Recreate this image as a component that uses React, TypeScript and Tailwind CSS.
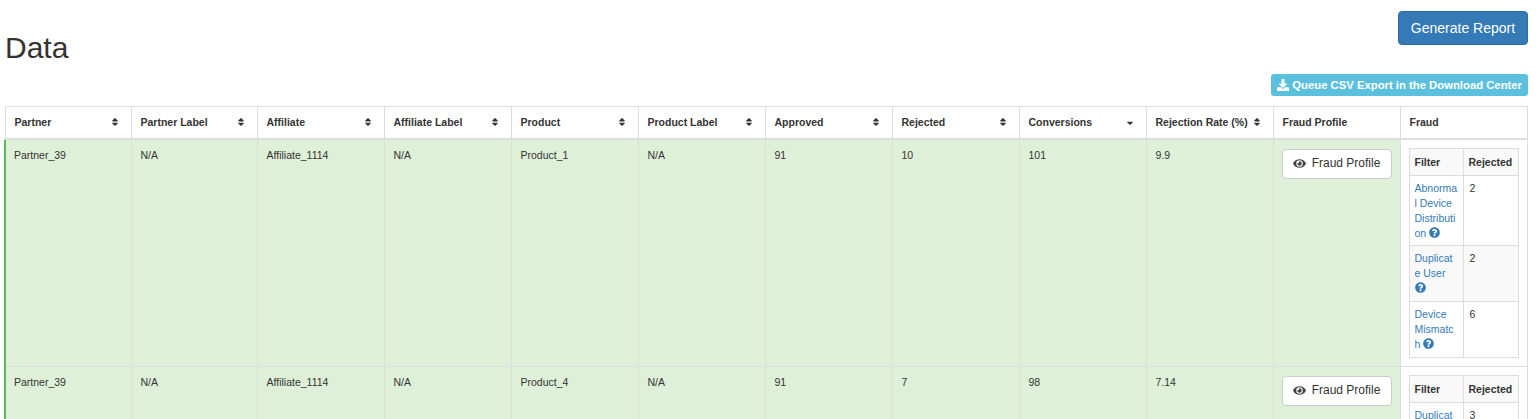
import React from "react";
import { FaDownload, FaEye, FaQuestionCircle, FaSort, FaSortDown } from "react-icons/fa";

const columns = [
  { label: "Partner", width: "w-[126px] pl-[9px]" },
  { label: "Partner Label", width: "w-[126px] pl-[9px]" },
  { label: "Affiliate", width: "w-[127px] pl-[9px]" },
  { label: "Affiliate Label", width: "w-[127px] pl-[9px]" },
  { label: "Product", width: "w-[127px] pl-[9px]" },
  { label: "Product Label", width: "w-[127px] pl-[9px]" },
  { label: "Approved", width: "w-[127px] pl-[9px]" },
  { label: "Rejected", width: "w-[127px] pl-[9px]" },
  { label: "Conversions", width: "w-[127px] pl-[9px]" },
  { label: "Rejection Rate (%)", width: "w-[127px] pl-[9px]" },
];

// the narrow filter column breaks words mid-way, lines are kept as they wrap
const rows = [
  {
    values: ["Partner_39", "N/A", "Affiliate_1114", "N/A", "Product_1", "N/A", "91", "10", "101", "9.9"],
    fraud: [
      { filter: ["Abnorma", "l Device", "Distributi", "on"], rejected: 2 },
      { filter: ["Duplicat", "e User", ""], rejected: 2 },
      { filter: ["Device", "Mismatc", "h"], rejected: 6 },
    ],
  },
  {
    values: ["Partner_39", "N/A", "Affiliate_1114", "N/A", "Product_4", "N/A", "91", "7", "98", "7.14"],
    fraud: [
      { filter: ["Duplicat", "e User", ""], rejected: 3 },
      { filter: ["Device", "Mismatc", "h"], rejected: 4 },
    ],
  },
];

const FraudTable = ({ items }: { items: { filter: string[]; rejected: number }[] }) => (
  <table className="w-full table-fixed border-collapse bg-white">
    <thead>
      <tr>
        <th className="w-[54px] border border-[#ddd] bg-[#f9f9f9] px-[5px] pt-[6px] pb-[5px] text-left font-bold">Filter</th>
        <th className="border border-[#ddd] bg-[#f9f9f9] px-[5px] pt-[6px] pb-[5px] text-left font-bold">Rejected</th>
      </tr>
    </thead>
    <tbody>
      {items.map((item, i) => (
        <tr key={item.filter.join("")} className={i % 2 === 1 ? "bg-[#f9f9f9]" : "bg-white"}>
          <td
            className={`border border-[#ddd] pt-[5px] pr-[3px] pl-[5px] align-top whitespace-nowrap text-[#337ab7] ${
              i === 0 ? "pb-[4px]" : "pb-[5px]"
            }`}
          >
            {item.filter.map((line, l) => (
              <React.Fragment key={l}>
                {line}
                {l < item.filter.length - 1 && <br />}
              </React.Fragment>
            ))}{" "}
            <FaQuestionCircle className="inline-block align-[-1px] text-[11px]" />
          </td>
          <td className="border border-[#ddd] p-[5px] pl-[6px] align-top">{item.rejected}</td>
        </tr>
      ))}
    </tbody>
  </table>
);

export default function App() {
  return (
    <div className="h-screen w-full overflow-hidden bg-white pl-[4px] pr-[9px] font-['Liberation_Sans',Arial,sans-serif] text-[10.5px] leading-[15px] text-[#333]">
      <div className="flex items-start justify-between">
        <h1 className="mt-[31px] pl-[1px] text-[30px] leading-[33px] font-normal">Data</h1>
        <button className="mt-[11px] h-[34px] w-[130px] rounded-[4px] border border-[#2e6da4] bg-[#337ab7] text-[14px] text-white">
          Generate Report
        </button>
      </div>
      <div className="mt-[10px] flex justify-end">
        <button className="flex h-[22px] items-center gap-[3px] rounded-[3px] bg-[#5bc0de] pr-[6px] pl-[6px] text-[11.3px] font-bold text-white">
          <FaDownload className="text-[12px]" />
          Queue CSV Export in the Download Center
        </button>
      </div>
      <table className="mt-[10px] w-full table-fixed border-collapse">
        <thead>
          <tr>
            {columns.map((col) => (
              <th key={col.label} className={`h-[32px] border border-b-2 border-[#ddd] pr-[8px] text-left font-bold ${col.width}`}>
                <div className="flex items-center justify-between pr-[3px]">
                  {col.label}
                  {col.label === "Conversions" ? (
                    <FaSortDown className="-translate-y-[1px] text-[10px] text-[#333]" />
                  ) : (
                    <FaSort className="text-[10px] text-[#333]" />
                  )}
                </div>
              </th>
            ))}
            <th className="w-[127px] border border-b-2 border-[#ddd] pr-[8px] pl-[9px] text-left font-bold">Fraud Profile</th>
            <th className="border border-b-2 border-[#ddd] pr-[8px] pl-[9px] text-left font-bold">Fraud</th>
          </tr>
        </thead>
        <tbody>
          {rows.map((row, r) => (
            <tr key={r}>
              {row.values.map((value, i) => (
                <td
                  key={i}
                  className={`border border-[#ddd] bg-[#dff0d8] py-[8px] pr-[8px] align-top ${
                    i === 0 ? "border-l-2 border-l-[#5cb85c] pl-[8px]" : "pl-[9px]"
                  }`}
                >
                  {value}
                </td>
              ))}
              <td className="border border-[#ddd] bg-[#dff0d8] p-[8px] align-top">
                <button className="mt-[1px] flex h-[30px] w-[110px] items-center justify-center gap-[6px] rounded-[4px] border border-[#ccc] bg-white text-[12px] text-[#333]">
                  <FaEye className="text-[13px] text-[#444]" />
                  Fraud Profile
                </button>
              </td>
              <td className="border border-[#ddd] bg-white p-[8px] align-top">
                <FraudTable items={row.fraud} />
              </td>
            </tr>
          ))}
        </tbody>
      </table>
    </div>
  );
}
